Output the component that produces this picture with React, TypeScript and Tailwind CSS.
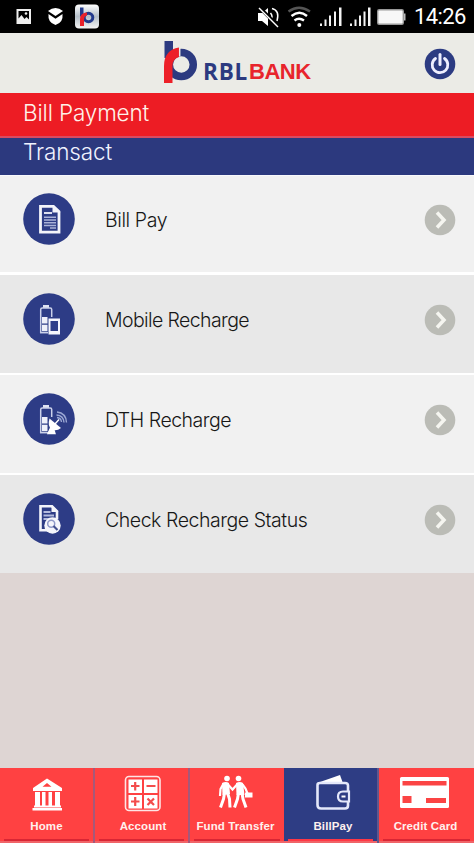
import React from 'react';

const StatusBar: React.FC = () => (
  <div className="flex h-[33px] shrink-0 items-start bg-black pl-[16px] text-white">
    <svg width="90" height="33" viewBox="16 0 90 33">
      {/* gallery */}
      <path d="M16.500 9h14.500v15H16.500z" fill="#eee" />
      <path d="M18.500 11h10.500v8.500l-2.500-2.500-2 2-3-4-3 3.500z" fill="#000" />
      <circle cx="26" cy="13.500" r="1.300" fill="#eee" />
      {/* shield */}
      <path d="M48 11q7.500-6 15 0l-7.500 5z" fill="#fff" />
      <path d="M48.500 14l7 4.800 7-4.800q1 8.500-7 11-8-2.500-7-11z" fill="#fff" />
      {/* app */}
      <defs>
        <linearGradient id="tile" x1="0" y1="0" x2="0" y2="1">
          <stop offset="0" stopColor="#fff" />
          <stop offset="0.5" stopColor="#b4bfc8" />
          <stop offset="1" stopColor="#f4f4f4" />
        </linearGradient>
      </defs>
      <rect x="75" y="4.500" width="24" height="24" rx="4" fill="url(#tile)" />
      <path d="M80 7.500h3.500v9H80z" fill="#223a8c" />
      <circle cx="88.500" cy="17.500" r="4.300" fill="none" stroke="#223a8c" strokeWidth="3" />
      <path d="M80 26v-7q0-6 7-6.500v3q-3 .5-3 4V26z" fill="#e8202a" />
    </svg>
    <svg className="ml-[150px]" width="152" height="33" viewBox="256 0 152 33">
      {/* muted speaker */}
      <path d="M258 13h4l6-5v18l-6-5h-4z" fill="#fff" />
      <path d="M270.500 13q3 3.500 0 7M272 8.500q8 2 5 12.500" fill="none" stroke="#fff" strokeWidth="1.500" />
      <path d="M260 8l18 18" stroke="#000" strokeWidth="3.500" />
      <path d="M259 8l19 19" stroke="#fff" strokeWidth="1.500" />
      {/* wifi */}
      <g fill="none" strokeWidth="2.400">
        <path d="M288.500 11.500q10.500-7.500 21.500 0" stroke="#555" />
        <path d="M291.500 16q8-6.500 15.500 0" stroke="#fff" />
        <path d="M294.500 20.500q4.500-3.500 9.500 0" stroke="#fff" />
      </g>
      <circle cx="299.300" cy="25" r="2" fill="#fff" />
      {/* signal bars */}
      <g fill="#f4f4f4">
        <path d="M320 23.500h2v2.500h-2zM324.500 19.500h2V26h-2zM329 15.500h2V26h-2zM334 11.500h2V26h-2zM339 7.500h2.500V26H339z" />
        <path d="M350 23.500h2v2.500h-2zM354.500 19.500h2V26h-2zM359 15.500h2V26h-2zM363.500 11.500h2V26h-2zM368 7.500h2.500V26H368z" />
      </g>
      {/* battery */}
      <rect x="377.700" y="9.700" width="25.600" height="14.600" rx="1.500" fill="#f8f8f8" stroke="#999" strokeWidth="1.400" />
      <path d="M404 13.500h1.500v7H404z" fill="#bbb" />
    </svg>
    <span className="ml-[6px] font-['Roboto',sans-serif] text-[22px] leading-[34px] tracking-[-0.600px]">14:26</span>
  </div>
);

const Header: React.FC = () => (
  <header className="flex h-[60px] shrink-0 items-start bg-[#ebebe6]">
    <svg className="ml-[163px] mt-[7px]" width="36" height="44" viewBox="163 40 36 44">
      <path d="M164.500 41h8.500v17h-8.500z" fill="#2c3a80" />
      <circle cx="181.300" cy="64.500" r="12" fill="none" stroke="#2c3a80" strokeWidth="7.500" />
      <path d="M164 83V66q0-16 15-18.500v9.500q-6.500 2-6.500 9V83z" fill="#ed2028" />
      <path d="M179.700 47v9.500" stroke="#ebebe6" strokeWidth="1.500" />
    </svg>
    <div className="ml-[4px] mt-[25px] flex text-[22.500px] font-bold leading-[27px]">
      <span className="w-[46px] font-['Open_Sans',sans-serif] tracking-[0.800px] text-[#2c3a80]">RBL</span>
      <span className="font-['Liberation_Sans',Arial,sans-serif] text-[22px] tracking-[-0.500px] text-[#e8242c]">BANK</span>
    </div>
    <svg className="ml-auto mr-[18px] mt-[15px]" width="32" height="32" viewBox="0 0 32 32">
      <circle cx="16" cy="16" r="15.300" fill="#2c3b82" />
      <path d="M11.500 10.500a7.800 7.800 0 1 0 9 0" fill="none" stroke="#eef" strokeWidth="2.800" strokeLinecap="round" />
      <path d="M16 6.500v10" stroke="#eef" strokeWidth="3" strokeLinecap="round" />
    </svg>
  </header>
);

const BillIcon = () => (
  <>
    <path d="M17.500 13.300h13l5.500 5.200v20.700H17.500z" fill="none" stroke="#f3f4fa" strokeWidth="2.800" />
    <path d="M29.500 12.500v7h8z" fill="#f3f4fa" />
    <path d="M21 19h8v2h-8z" fill="#dde0f0" />
    <path d="M21 24.200h12M21 27h12M21 29.800h12M21 32.500h12M27 35h6" stroke="#aab2d8" strokeWidth="1.600" />
  </>
);

const Battery = () => (
  <>
    <path d="M20 12h6v3h-6z" fill="#dfe3f2" />
    <path d="M17.700 40V16.500q0-1.500 1.500-1.500h8q1.500 0 1.500 1.500V24" fill="none" stroke="#cbd1ea" strokeWidth="1.500" />
    <path d="M19 24h5.500v6.500H19zM19 31.800h5.500v6.500H19z" fill="#eef0fa" />
    <path d="M17 39.700h8" stroke="#cbd1ea" strokeWidth="1.500" />
  </>
);

const MobileIcon = () => (
  <>
    <Battery />
    <path d="M25.500 25.500H37v16H25.500z" fill="#f5f6fc" />
    <path d="M27.500 28H35v10h-7.500z" fill="#303f89" />
  </>
);

const DishIcon = () => (
  <>
    <Battery />
    <path d="M26.500 25.500q-2.500 8 2.500 11 4.500 2 9-1.500z" fill="#fff" />
    <path d="M28 34l-3 6.500h7l-2-6.500zM32 31l4-4.500" fill="#fff" stroke="#fff" strokeWidth="1.400" />
    <path d="M34 24.500q4 .5 4.500 4.500M33.500 22q7 .5 7.500 7.500M34 19q9 1 9.500 10.500" fill="none" stroke="#9ba7d3" strokeWidth="1.400" />
  </>
);

const StatusIcon = () => (
  <>
    <path d="M24 37.300h-6.500V13.300H29l5 5V26" fill="none" stroke="#f3f4fa" strokeWidth="2.600" />
    <path d="M28.500 12v7h7z" fill="#f3f4fa" />
    <path d="M20.500 19h7M20.500 22.500h10.500M20.500 26h7" stroke="#b4bbdd" strokeWidth="1.800" />
    <circle cx="29.500" cy="32.500" r="8.200" fill="#f4f5fb" />
    <circle cx="28.200" cy="30.800" r="3.500" fill="none" stroke="#8f99c8" strokeWidth="1.500" />
    <path d="M30.500 33l4 4" stroke="#44518f" strokeWidth="2.200" />
  </>
);

const rows = [
  { label: 'Bill Pay', Icon: BillIcon, row: 'h-[99px] bg-[#f1f1f1] border-b-[3px] pt-[17px]', track: 'tracking-[-0.400px]' },
  { label: 'Mobile Recharge', Icon: MobileIcon, row: 'h-[100px] bg-[#e8e8e8] border-b-2 pt-[18px]', track: 'tracking-[-0.600px]' },
  { label: 'DTH Recharge', Icon: DishIcon, row: 'h-[100px] bg-[#f1f1f1] border-b-2 pt-[18px]', track: 'tracking-[-0.480px]' },
  { label: 'Check Recharge Status', Icon: StatusIcon, row: 'h-[98px] bg-[#e8e8e8] pt-[18px]', track: 'tracking-[-0.450px]' },
];

const HomeIcon = () => (
  <g fill="#fff">
    <path fillRule="evenodd" d="M47 778.500l15 9.500v3H33v-3zM47 783l-4.500 3.800h9z" />
    <path d="M35 792h5v15h-5zM42 792h3.500v15H42zM48.500 792H52v15h-3.500zM55 792h5v15h-5zM34 805.500h27v2H34zM32.500 808h29.500v2.500H32.500z" />
  </g>
);

const AccountIcon = () => (
  <>
    <rect x="125.500" y="776.500" width="34.500" height="34" rx="3.500" fill="none" stroke="#ffe5e5" strokeWidth="1.600" />
    <path d="M128.500 779.500h13.500v13.500h-13.500zM144 779.500h13.500v13.500H144zM128.500 795h13.500v13.500h-13.500zM144 795h13.500v13.500H144z" fill="#fff" />
    <path d="M131 786h8.500M135.200 782v8.500M146.500 786h9M131 801.500h8.500M135.200 797v9M147.500 798.500l6.500 6.500M154 798.500l-6.500 6.500" stroke="#f34c4c" strokeWidth="2.200" />
  </>
);

const TransferIcon = () => (
  <>
    <g fill="#fff">
      <circle cx="227" cy="778.500" r="2.800" />
      <circle cx="238.500" cy="778.500" r="2.800" />
      <path d="M222 783q4-2 7 0l1 11-7.500 1z" />
      <path d="M236 783q4-2 7 0l1.500 12h-8z" />
      <path d="M245 792.500h7.500v5H245z" />
    </g>
    <g fill="none" stroke="#fff" strokeWidth="3" strokeLinejoin="round">
      <path d="M224.500 793l-1 6-3 8.500M227.500 793l2 6 .5 8.500" />
      <path d="M238.500 793l-1 6-3 8.500M242 793l1 6 3 8.500" />
    </g>
    <path d="M223 784.500l-2.500 4.500-.5 7M228 784.500l4.500 5 5-5.500M242.500 784.500l3 4 2 5" fill="none" stroke="#fff" strokeWidth="2.200" />
  </>
);

const WalletIcon = () => (
  <>
    <path d="M320 782l20-7 2.500 7z" fill="#fff" />
    <path d="M317.500 785v20q0 3.500 3.500 3.500h24q3 0 3-3v-20q0-2.500-3-2.500h-25q-2.500 0-2.500 2z" fill="none" stroke="#e4e8fa" strokeWidth="2.600" />
    <path d="M349 791.500h-6q-5 0-5 5t5 5h6z" fill="#2e3d84" stroke="#e4e8fa" strokeWidth="2.200" />
    <path d="M341.500 795.500h4v2h-4z" fill="#fff" />
  </>
);

const CardIcon = () => (
  <>
    <rect x="400" y="777" width="49" height="31" rx="1.500" fill="#fff" />
    <path d="M402.500 781h44v4.500h-44zM402.500 796h9v7h-9zM426 798h20v5h-20z" fill="#fb4444" />
  </>
);

const tabs = [
  { label: 'Home', Icon: HomeIcon, box: '0 768 93 50', cell: 'w-[93px] bg-[#ff4142]', text: '', strip: 'bg-[#d92634]' },
  { label: 'Account', Icon: AccountIcon, box: '95 768 93 50', cell: 'w-[95px] border-l-2 border-[#a6587a] bg-[#ff4142]', text: 'pl-[3px]', strip: 'bg-[#d92634]' },
  { label: 'Fund Transfer', Icon: TransferIcon, box: '190 768 94 50', cell: 'w-[96px] border-l-2 border-[#a6587a] bg-[#ff4142]', text: 'pr-[3px]', strip: 'bg-[#d92634]' },
  { label: 'BillPay', Icon: WalletIcon, box: '284 768 93 50', cell: 'w-[95px] border-r-2 border-[#61578c] bg-[#2e3d84]', text: 'pl-[5px]', strip: 'bg-[#ff3845]' },
  { label: 'Credit Card', Icon: CardIcon, box: '379 768 95 50', cell: 'w-[95px] bg-[#ff4142]', text: 'pr-[2px]', strip: 'bg-[#d92634]' },
];

const App: React.FC = () => (
  <div className="flex h-[843px] w-[474px] flex-col overflow-hidden bg-[#ded5d3] font-['Inter','Liberation_Sans',sans-serif]">
    <StatusBar />
    <Header />

    <div className="h-[45px] shrink-0 border-b-2 border-[#d94a61] bg-[#ed1c24] pl-[23px] text-[22.500px] font-light leading-[40px] tracking-[-0.150px] text-[#fff2e9]">
      Bill Payment
    </div>
    <div className="h-[38px] shrink-0 border-b border-[#f8f8fc] bg-[#2c397e] pl-[23px] text-[22.500px] font-light leading-[28px] tracking-[-0.100px] text-[#f0f3ff]">
      Transact
    </div>

    <main className="shrink-0">
      {rows.map(({ label, Icon, row, track }) => (
        <div key={label} className={`flex items-start border-white pl-[23px] pr-[18px] ${row}`}>
          <svg className="shrink-0" width="52" height="52" viewBox="0 0 52 52">
            <circle cx="26" cy="26" r="25.800" fill="#2d3c86" />
            <Icon />
          </svg>
          <span className={`ml-[30px] mt-[12px] text-[19.500px] font-light leading-[30px] text-[#171717] ${track}`}>{label}</span>
          <svg className="ml-auto mt-[11px] shrink-0" width="32" height="32" viewBox="0 0 32 32">
            <circle cx="16" cy="16" r="15.300" fill="#bbbcb6" />
            <path d="M13 8.500l7 7.500-7 7.500" fill="none" stroke="#f5f5f0" strokeWidth="3.500" />
          </svg>
        </div>
      ))}
    </main>

    <nav className="mt-auto flex h-[75px] shrink-0">
      {tabs.map(({ label, Icon, box, cell, text, strip }) => (
        <div key={label} className={`flex shrink-0 flex-col ${cell}`}>
          <svg className="h-[50px] w-full" viewBox={box}>
            <Icon />
          </svg>
          <span className={`h-[21px] whitespace-nowrap text-center font-['Liberation_Sans',Arial,sans-serif] text-[11.500px] font-bold leading-[16px] tracking-[0.100px] text-[#fff0ee] ${text}`}>
            {label}
          </span>
          <div className={`mx-[4px] h-[2px] ${strip}`} />
          <div className="h-[2px] bg-[#f06468]" />
        </div>
      ))}
    </nav>
  </div>
);

export default App;
